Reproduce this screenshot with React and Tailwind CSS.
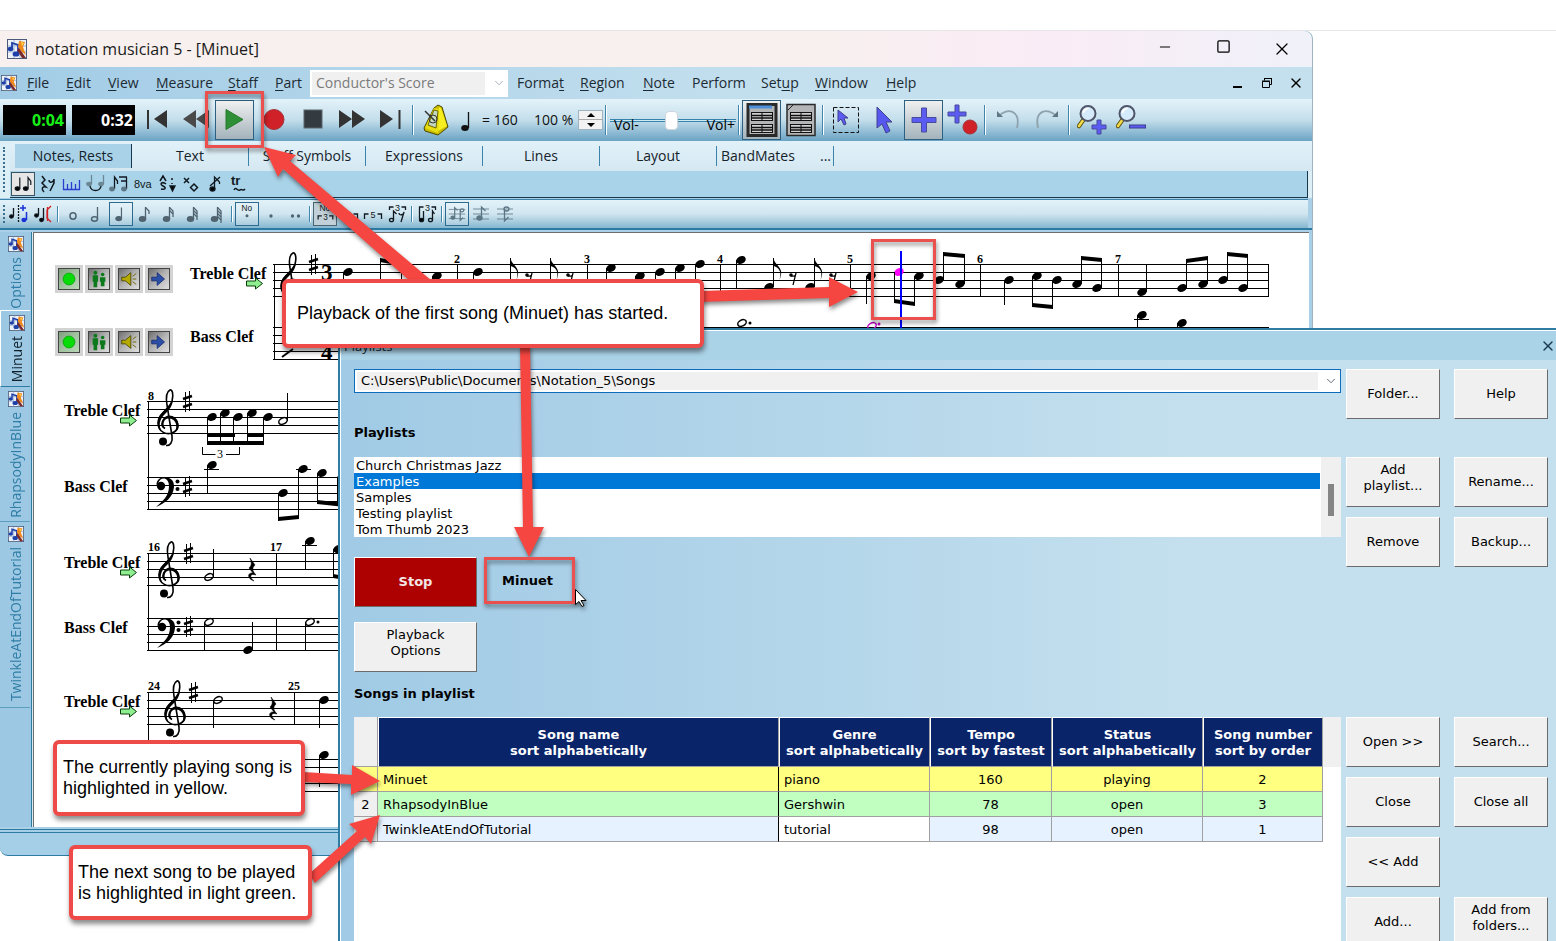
import { useState } from "react";
import { ChevronDown, Minus, Square, X } from "lucide-react";

const menusLeft = [
  { before: "", key: "F", after: "ile", width: "w-[39px]" },
  { before: "", key: "E", after: "dit", width: "w-[42px]" },
  { before: "", key: "V", after: "iew", width: "w-12" },
  { before: "", key: "M", after: "easure", width: "w-[72px]" },
  { before: "", key: "S", after: "taff", width: "w-[47px]" },
  { before: "", key: "P", after: "art", width: "w-[35px]" },
];

const menusRight = [
  { before: "Forma", key: "t", after: "", width: "w-[63px]" },
  { before: "", key: "R", after: "egion", width: "w-[63px]" },
  { before: "", key: "N", after: "ote", width: "w-[49px]" },
  { before: "Perform", key: "", after: "", width: "w-[69px]" },
  { before: "Set", key: "u", after: "p", width: "w-[54px]" },
  { before: "", key: "W", after: "indow", width: "w-[71px]" },
  { before: "", key: "H", after: "elp", width: "w-12" },
];

const paletteTabs = ["Notes, Rests", "Text", "Staff Symbols", "Expressions", "Lines", "Layout"];

const documents = [
  { name: "Options", height: "h-[79px]" },
  { name: "Minuet", height: "h-[76px]" },
  { name: "RhapsodyInBlue", height: "h-[135px]" },
  { name: "TwinkleAtEndOfTutorial", height: "h-[186px]" },
];

const playlists = [
  "Church Christmas Jazz",
  "Examples",
  "Samples",
  "Testing playlist",
  "Tom Thumb 2023",
];

const columns = [
  { title: "Song name", sort: "sort alphabetically", width: "" },
  { title: "Genre", sort: "sort alphabetically", width: "w-[151px]" },
  { title: "Tempo", sort: "sort by fastest", width: "w-[122px]" },
  { title: "Status", sort: "sort alphabetically", width: "w-[151px]" },
  { title: "Song number", sort: "sort by order", width: "w-[120px]" },
];

const songs = [
  { row: "", name: "Minuet", genre: "piano", tempo: 160, status: "playing", number: 2 },
  { row: "2", name: "RhapsodyInBlue", genre: "Gershwin", tempo: 78, status: "open", number: 3 },
  { row: "", name: "TwinkleAtEndOfTutorial", genre: "tutorial", tempo: 98, status: "open", number: 1 },
];

/* ---------- Icons ---------- */

function AppLogo({ className }) {
  return (
    <svg viewBox="0 0 20 20" className={className} aria-hidden="true">
      <rect x="0.5" y="0.5" width="19" height="19" fill="#eef3fb" stroke="#4a5a78" />
      <path d="M1 7h18M1 13h18M7 1v18M13 1v18" stroke="#9fb2d4" />
      <path d="M5 9V4l6 2v8" fill="none" stroke="#1c3fa8" strokeWidth="1.800" />
      <ellipse cx="3.5" cy="10" rx="2.800" ry="2.200" fill="#1c3fa8" />
      <ellipse cx="9" cy="15" rx="3.400" ry="2.600" fill="#1c3fa8" />
      <path d="M12 2l6 1-2 5 3 8-4-3-4-5z" fill="#f08a1c" />
      <path d="M12 9l7 10h-4l-5-8z" fill="#7c2b2a" />
      <path d="M14 3l3 1-2 3z" fill="#ffd34d" />
    </svg>
  );
}

function NoteIcon({ flags = 0, hollow = false, stem = true, color = "#4f6470" }) {
  return (
    <svg viewBox="0 0 24 24" className="h-6 w-6" aria-hidden="true">
      <ellipse
        cx={stem ? 9.5 : 12}
        cy={stem ? 17 : 14}
        rx="3"
        ry={stem ? 2.2 : 3.2}
        fill={hollow ? "none" : color}
        stroke={color}
        strokeWidth="1.5"
      />
      {stem && <path d="M12.500 17V5" stroke={color} strokeWidth="1.300" />}
      {Array.from({ length: flags }, (_, i) => (
        <path
          key={i}
          d={`M12.500 ${5.5 + i * 3}l3.500 3.500v3`}
          fill="none"
          stroke={color}
          strokeWidth="1.3"
        />
      ))}
    </svg>
  );
}

function Glyph({ children, ...rest }) {
  return (
    <svg
      viewBox="0 0 24 24"
      className="h-6 w-6"
      fill="none"
      stroke="#101820"
      strokeWidth="1.3"
      aria-hidden="true"
      {...rest}
    >
      {children}
    </svg>
  );
}

function GlyphText({ x, y, size = 9, children }) {
  return (
    <text x={x} y={y} fontSize={size} fill="#101820" stroke="none" fontFamily="Liberation Sans, sans-serif">
      {children}
    </text>
  );
}

function BigIcon({ children }) {
  return (
    <svg viewBox="0 0 30 30" className="h-[30px] w-[30px]" aria-hidden="true">
      {children}
    </svg>
  );
}

function BluePlus({ x, y, r = 12, w = 5 }) {
  const h = w / 2;
  return (
    <path
      d={`M${x - h} ${y - r}h${w}v${r - h}h${r - h}v${w}h${h - r}v${r - h}h${-w}v${h - r}h${h - r}v${-w}h${r - h}z`}
      fill="#5b5cf2"
      stroke="#4a4a9c"
      strokeWidth="1"
    />
  );
}

function Magnifier() {
  return (
    <>
      <path d="M7 14l-5 7" stroke="#5b5010" strokeWidth="4.500" strokeLinecap="round" />
      <path d="M7 14l-5 7" stroke="#f2d94a" strokeWidth="2.500" strokeLinecap="round" />
      <circle cx="11" cy="8.500" r="7.500" fill="#d5ebfb" stroke="#4f5568" strokeWidth="2" />
      <path d="M6.500 8a5 5 0 0 1 5-4.500" fill="none" stroke="#fff" strokeWidth="2" />
    </>
  );
}

function TableIcon({ framed }) {
  return (
    <svg viewBox="0 0 32 34" className="h-[34px] w-8" aria-hidden="true">
      <rect x="2" y="1.500" width="28" height="31" fill="#b3b5b7" stroke="#2a2a2a" strokeWidth={framed ? 3 : 1.5} />
      {framed && <path d="M3 4h23" stroke="#4d8fd8" strokeWidth="3" />}
      {!framed && <path d="M3 7l5-5" stroke="#222" />}
      {[9, 21].map((y) => (
        <g key={y} stroke="#111" fill="none">
          <rect x="5.500" y={y + 0.5} width="21" height="8" fill="#d0d0d0" />
          <path d={`M5 ${y + 3.5}h22M5 ${y + 6}h22`} strokeWidth="1.500" />
          <path d={`M16 ${y}v9`} />
        </g>
      ))}
    </svg>
  );
}

/* ---------- Toolbar pieces ---------- */

function ToolButton({ label, pressed, children }) {
  return (
    <button
      type="button"
      aria-label={label}
      className={
        pressed
          ? "flex h-10 w-[39px] shrink-0 items-center justify-center border border-[#2c5f80] bg-gradient-to-b from-[#f0f0f0] to-[#a3b3bb]"
          : "flex h-10 w-[39px] shrink-0 items-center justify-center"
      }
    >
      {children}
    </button>
  );
}

function SmallButton({ label, pressed, children }) {
  return (
    <button
      type="button"
      aria-label={label}
      className={
        pressed
          ? "flex h-6 w-6 shrink-0 items-center justify-center border border-[#2c6a90] bg-[#ffffff30]"
          : "flex h-6 w-6 shrink-0 items-center justify-center"
      }
    >
      {children}
    </button>
  );
}

function Separator({ tall }) {
  return (
    <div className="flex w-[6px] shrink-0 justify-center">
      <div
        className={
          tall
            ? "h-[30px] w-[2px] border-l border-[#3f86ad] bg-white"
            : "h-4 w-[2px] border-l border-[#3f86ad] bg-white"
        }
      />
    </div>
  );
}

function MenuItem({ item }) {
  return (
    <button type="button" className={`${item.width} shrink-0 text-left whitespace-nowrap`}>
      {item.before}
      <u className="underline-offset-2">{item.key}</u>
      {item.after}
    </button>
  );
}

function TitleBar() {
  return (
    <div className="flex h-9 items-center rounded-tr-lg bg-gradient-to-r from-[#f8f0ee] from-60% via-[#faecf6] via-80% to-[#f0f1f9] pl-[7px]">
      <AppLogo className="h-5 w-5" />
      <h1 className="ml-2 flex-1 text-base leading-5 text-[#1b1b1b]">notation musician 5 - [Minuet]</h1>
      <div className="flex text-black">
        <button type="button" aria-label="Minimize" className="flex w-[58px] justify-center">
          <Minus className="h-4 w-4" strokeWidth={1.5} />
        </button>
        <button type="button" aria-label="Maximize" className="flex w-[58px] justify-center">
          <Square className="h-[15px] w-[15px]" strokeWidth={2} />
        </button>
        <button type="button" aria-label="Close" className="flex w-[60px] justify-center">
          <X className="h-5 w-5" strokeWidth={1.5} />
        </button>
      </div>
    </div>
  );
}

function MenuBar() {
  return (
    <div className="flex h-8 items-center bg-gradient-to-r from-[#a2cce6] to-[#c4e0ee] to-60% text-sm text-[#1c2a33]">
      <AppLogo className="ml-[1px] mr-[10px] h-4 w-4" />
      {menusLeft.map((item) => (
        <MenuItem key={item.key} item={item} />
      ))}
      <div className="relative mr-[9px] h-[27px] w-[198px] shrink-0 border-2 border-white bg-white">
        <select
          aria-label="Score view"
          disabled
          className="h-full w-[173px] appearance-none bg-[#f0f0f0] pl-1 text-sm text-[#7b7b7b] opacity-100"
        >
          <option>Conductor's Score</option>
        </select>
        <ChevronDown className="absolute right-0 top-1 h-[14px] w-[14px] text-gray-400" strokeWidth={1.5} />
      </div>
      {menusRight.map((item) => (
        <MenuItem key={item.before + item.key} item={item} />
      ))}
      <div className="ml-auto mr-2 flex gap-3 text-black">
        <button type="button" aria-label="Minimize document" className="flex h-4 w-[17px] items-end justify-center pb-[3px]">
          <span className="h-[2px] w-[9px] bg-black" />
        </button>
        <button type="button" aria-label="Restore document" className="flex h-4 w-[17px] items-center justify-center">
          <svg viewBox="0 0 12 12" className="h-3 w-3" fill="none" stroke="#000">
            <path d="M3.500 3.500v-2h7v6h-2M3 1.500h8" />
            <path d="M1.500 4.500h7v6h-7zM1 4h8" />
          </svg>
        </button>
        <button type="button" aria-label="Close document" className="flex h-4 w-[17px] items-center justify-center">
          <X className="h-4 w-4" />
        </button>
      </div>
    </div>
  );
}

function Transport() {
  return (
    <div className="flex h-[42px] items-center bg-gradient-to-b from-[#e4f3fa] via-[#c3deeb] to-[#6aa3c4] pl-[3px]">
      <output className="flex h-[30px] w-[63px] items-center justify-end bg-black pr-[2px] font-['Noto_Sans',sans-serif] text-base font-bold text-[#17f017]">
        0:04
      </output>
      <output className="ml-[6px] mr-[2px] flex h-[30px] w-[63px] items-center justify-end bg-black pr-[2px] font-['Noto_Sans',sans-serif] text-base font-bold text-white">
        0:32
      </output>
      <ToolButton label="Go to start">
        <BigIcon>
          <path d="M6 5v19" stroke="#333" strokeWidth="2" />
          <path d="M25 5v18L12 14z" fill="#333" />
        </BigIcon>
      </ToolButton>
      <ToolButton label="Rewind">
        <BigIcon>
          <path d="M15 5v18L2 14zM28 5v18L15 14z" fill="#4a4a4a" />
        </BigIcon>
      </ToolButton>
      <ToolButton label="Play" pressed>
        <BigIcon>
          <path d="M6 4.500l17 10-17 10z" fill="#2f8f37" stroke="#277a2e" />
        </BigIcon>
      </ToolButton>
      <ToolButton label="Record">
        <BigIcon>
          <circle cx="15" cy="14.500" r="10" fill="#cf2127" stroke="#a3343a" />
        </BigIcon>
      </ToolButton>
      <ToolButton label="Stop playback">
        <BigIcon>
          <rect x="6" y="5" width="18" height="18" fill="#333a40" stroke="#5b666d" />
        </BigIcon>
      </ToolButton>
      <ToolButton label="Fast forward">
        <BigIcon>
          <path d="M2 5v18l13-9zM15 5v18l13-9z" fill="#333" />
        </BigIcon>
      </ToolButton>
      <ToolButton label="Go to end">
        <BigIcon>
          <path d="M23.500 5v19" stroke="#333" strokeWidth="2" />
          <path d="M4 5v18l13-9z" fill="#333" />
        </BigIcon>
      </ToolButton>
      <Separator tall />
      <ToolButton label="Metronome">
        <svg viewBox="0 0 30 32" className="h-8 w-[30px]" aria-hidden="true">
          <path d="M13 4l4-3 4 2 6 20-10 8-13-4-1-3z" fill="#c9bd00" stroke="#4d4700" />
          <path d="M18 3l-1 24 9-5-6-18z" fill="#f6ee1e" />
          <path d="M13 4L4 24l13 5 1-24z" fill="#e9de10" />
          <path d="M13 6L7 21l8 3 2-17z" fill="#c5d9c0" stroke="#6b6600" />
          <path d="M4 7l10 10" stroke="#333" strokeWidth="1.500" />
          <circle cx="12" cy="15" r="4" fill="none" stroke="#333" />
        </svg>
      </ToolButton>
      <div className="flex w-[21px] justify-center">
        <svg viewBox="0 0 12 24" className="h-6 w-3" aria-hidden="true">
          <ellipse cx="5" cy="20" rx="3.800" ry="3" fill="#111" />
          <path d="M8.500 20V4" stroke="#111" strokeWidth="1.300" />
        </svg>
      </div>
      <span className="ml-[6px] w-[52px] shrink-0 text-sm whitespace-nowrap text-[#111]">= 160</span>
      <span className="w-11 shrink-0 text-sm whitespace-nowrap text-[#111]">100 %</span>
      <div className="flex w-[25px] shrink-0 flex-col border border-[#9fb4c0] bg-[#f2f2f2]">
        <button type="button" aria-label="Faster" className="flex h-[9px] items-center justify-center border-b border-[#aaa]">
          <svg viewBox="0 0 8 4" className="h-1 w-2">
            <path d="M0 4l4-4 4 4z" />
          </svg>
        </button>
        <button type="button" aria-label="Slower" className="flex h-[9px] items-center justify-center">
          <svg viewBox="0 0 8 4" className="h-1 w-2">
            <path d="M0 0l4 4 4-4z" />
          </svg>
        </button>
      </div>
      <Separator tall />
      <div className="relative ml-[1px] flex h-10 w-[126px] shrink-0 items-center">
        <input
          type="range"
          aria-label="Volume"
          defaultValue={49}
          className="h-[3px] w-full appearance-none border-y border-[#3484ae] bg-[#cfe8f4] [&::-webkit-slider-thumb]:h-[19px] [&::-webkit-slider-thumb]:w-[13px] [&::-webkit-slider-thumb]:appearance-none [&::-webkit-slider-thumb]:rounded [&::-webkit-slider-thumb]:border [&::-webkit-slider-thumb]:border-gray-300 [&::-webkit-slider-thumb]:bg-white"
        />
        <span className="pointer-events-none absolute left-1 top-[15px] text-sm leading-5 font-medium text-black">Vol-</span>
        <span className="pointer-events-none absolute right-[1px] top-[15px] text-sm leading-5 font-medium text-black">Vol+</span>
      </div>
      <Separator tall />
      <ToolButton label="Piano palette" pressed>
        <TableIcon framed />
      </ToolButton>
      <ToolButton label="Part list">
        <TableIcon />
      </ToolButton>
      <Separator tall />
      <ToolButton label="Select region">
        <BigIcon>
          <rect x="2.500" y="2.500" width="25" height="25" fill="none" stroke="#111" strokeDasharray="4 2" />
          <path d="M7 5v12l3-3 3 6 2-1-2-6h4z" fill="#5b5cf2" stroke="#40408a" />
        </BigIcon>
      </ToolButton>
      <ToolButton label="Pointer">
        <BigIcon>
          <path d="M7 2v21l5-4 4 9 4-2-4-9h6z" fill="#5758ef" stroke="#42428c" />
        </BigIcon>
      </ToolButton>
      <ToolButton label="Add note" pressed>
        <BigIcon>
          <BluePlus x={15} y={15} />
        </BigIcon>
      </ToolButton>
      <ToolButton label="Add and record">
        <svg viewBox="0 0 32 32" className="h-8 w-8" aria-hidden="true">
          <BluePlus x={10} y={10} r={9} w={4} />
          <circle cx="23" cy="23" r="7" fill="#cf2127" stroke="#a3343a" />
        </svg>
      </ToolButton>
      <Separator tall />
      <ToolButton label="Undo">
        <BigIcon>
          <path d="M24 23C28 5 14 2 6 11" fill="none" stroke="#8fa3ae" strokeWidth="1.800" />
          <path d="M4 6v6h6z" fill="#5f7683" />
        </BigIcon>
      </ToolButton>
      <ToolButton label="Redo">
        <BigIcon>
          <path d="M6 23C2 5 16 2 24 11" fill="none" stroke="#8fa3ae" strokeWidth="1.800" />
          <path d="M26 6v6h-6z" fill="#5f7683" />
        </BigIcon>
      </ToolButton>
      <Separator tall />
      <ToolButton label="Zoom in">
        <BigIcon>
          <Magnifier />
          <BluePlus x={22} y={22} r={7} w={4} />
        </BigIcon>
      </ToolButton>
      <ToolButton label="Zoom out">
        <BigIcon>
          <Magnifier />
          <rect x="13.500" y="20" width="16" height="3" fill="#5b5cf2" stroke="#3c3c8c" />
        </BigIcon>
      </ToolButton>
    </div>
  );
}

function Palettes() {
  return (
    <div className="flex bg-[#dceef6]">
      <div className="my-[6px] ml-[3px] mr-[5px] w-0 border-l-2 border-dotted border-[#3c6f8d]" />
      <div className="min-w-0 flex-1">
        <div className="flex h-[30px] items-center bg-gradient-to-b from-[#e1f1f9] to-[#d5e8f1] pl-[5px] text-sm text-[#16222b]">
          {paletteTabs.map((tab, i) => (
            <button
              key={tab}
              type="button"
              className={
                i === 0
                  ? "h-6 w-[117px] shrink-0 border-r border-[#16394e] bg-[#a9d2e8]"
                  : "h-5 w-[117px] shrink-0 border-r border-[#3b83aa]"
              }
            >
              {tab}
            </button>
          ))}
          <button
            type="button"
            className="flex h-5 w-[117px] shrink-0 items-center justify-between border-r border-[#3b83aa] pr-[2px] pl-1"
          >
            <span>BandMates</span>
            <span>...</span>
          </button>
        </div>
        <div className="mr-1 flex h-[27px] items-center border-r border-b border-[#17384b] bg-[#a9d3e8] pl-px">
          <button
            type="button"
            aria-label="Notes"
            className="flex h-6 w-6 shrink-0 items-center justify-center border border-[#3a5361] bg-[#e6e6e6]"
          >
            <Glyph>
              <ellipse cx="6" cy="17" rx="2.500" ry="2" fill="#000" />
              <ellipse cx="15" cy="17" rx="2.500" ry="2" fill="#000" />
              <path d="M8.500 17V5M17.500 17V5l3 4v4" />
            </Glyph>
          </button>
          <SmallButton label="Rests">
            <Glyph>
              <path d="M7 4l3 4-3 3 4 4c-4-1-5 2-2 5M14 8c0 4 5 2 5-1v4l-4 8" strokeWidth="1.500" />
            </Glyph>
          </SmallButton>
          <SmallButton label="Rhythm grid">
            <Glyph stroke="#2a3fd0">
              <path d="M4.500 7v11M8.500 12v6M12.500 10v8M16.500 12v6M20.500 8v10M4 17.500h17" />
            </Glyph>
          </SmallButton>
          <SmallButton label="Ties">
            <Glyph>
              <path d="M8.500 12V3M20.500 12V3" stroke="#6c8795" />
              <path d="M7 14c1 6 10 6 11 0" strokeWidth="1.500" />
              <ellipse cx="6" cy="12" rx="2.200" ry="1.700" fill="#6c8795" stroke="#6c8795" />
              <ellipse cx="18" cy="12" rx="2.200" ry="1.700" fill="#6c8795" stroke="#6c8795" />
            </Glyph>
          </SmallButton>
          <SmallButton label="Beams">
            <Glyph>
              <path d="M7.500 17V5l3 4v3M12 5h8M14 9h6M19.500 5v12" />
              <ellipse cx="5" cy="17" rx="2.200" ry="1.800" fill="#5d7685" stroke="#5d7685" />
              <ellipse cx="17" cy="17" rx="2.200" ry="1.800" fill="#5d7685" stroke="#5d7685" />
            </Glyph>
          </SmallButton>
          <SmallButton label="Octave">
            <Glyph>
              <GlyphText x="3" y="16" size={11}>8va</GlyphText>
            </Glyph>
          </SmallButton>
          <SmallButton label="Ornaments">
            <Glyph>
              <path d="M5 9l3-5 3 5M11 12c-4-3-7 0-3 2s2 4-2 3M17 6v2M17 11v1" strokeWidth="1.500" />
              <path d="M15 14h5l-2.500 5z" fill="#000" />
            </Glyph>
          </SmallButton>
          <SmallButton label="Note heads">
            <Glyph>
              <path d="M5 6l5 5M10 6l-5 5M15 12l3.500 3.500-3.500 3.500-3.500-3.500z" strokeWidth="1.500" />
            </Glyph>
          </SmallButton>
          <SmallButton label="Grace notes">
            <Glyph>
              <path d="M11.500 17V5l5 5v2M7 14l10-9" />
              <ellipse cx="9.500" cy="17" rx="2.500" ry="2" fill="#000" />
            </Glyph>
          </SmallButton>
          <SmallButton label="Trills">
            <Glyph>
              <text x="4" y="13" fontSize="13" fontWeight="bold" fill="#101820" stroke="none" fontFamily="Liberation Sans, sans-serif">
                tr
              </text>
              <path d="M7 18c2-4 4 2 6 0s3 2 5-1" strokeWidth="1.500" />
            </Glyph>
          </SmallButton>
        </div>
      </div>
    </div>
  );
}

function Tuplet({ n }) {
  return (
    <>
      <path d="M3.500 17v-5h4M20.500 17v-5h-4" />
      <GlyphText x={9.5} y={16}>{n}</GlyphText>
    </>
  );
}

function NoteValues() {
  return (
    <div className="mt-px mr-1 flex h-[29px] items-center border-t border-[#3b83aa] bg-gradient-to-b from-[#e3f2f9] via-[#cfe5ef] to-[#86b7d0]">
      <div className="ml-[3px] mr-[2px] h-[18px] w-[2px] border-l-2 border-dotted border-[#3c6f8d]" />
      <SmallButton label="Insert notes">
        <Glyph>
          <path d="M6.500 14V6" />
          <path d="M11.500 3v17" strokeDasharray="2 1" />
          <ellipse cx="4.500" cy="14.500" rx="1.800" ry="1.500" fill="#000" />
          <path d="M13 6h6M16 3v6M19.500 18V10" stroke="#1830d8" strokeWidth="1.500" />
          <ellipse cx="17" cy="18" rx="2" ry="1.500" fill="#1830d8" stroke="#1830d8" />
        </Glyph>
      </SmallButton>
      <SmallButton label="Replace notes">
        <Glyph>
          <path d="M7.500 13V6M12.500 18V6" />
          <ellipse cx="5.500" cy="13.500" rx="1.800" ry="1.500" fill="#000" />
          <ellipse cx="10.500" cy="18" rx="1.800" ry="1.500" fill="#000" />
          <path d="M20 4l-4 4v8l4 4M16.500 5v14" stroke="#d02020" />
        </Glyph>
      </SmallButton>
      <Separator />
      <SmallButton label="Whole note">
        <NoteIcon hollow stem={false} />
      </SmallButton>
      <SmallButton label="Half note">
        <NoteIcon hollow />
      </SmallButton>
      <SmallButton label="Quarter note" pressed>
        <NoteIcon />
      </SmallButton>
      <SmallButton label="Eighth note">
        <NoteIcon flags={1} />
      </SmallButton>
      <SmallButton label="Sixteenth note">
        <NoteIcon flags={2} />
      </SmallButton>
      <SmallButton label="Thirty-second note">
        <NoteIcon flags={3} />
      </SmallButton>
      <SmallButton label="Sixty-fourth note">
        <NoteIcon flags={4} />
      </SmallButton>
      <Separator />
      <SmallButton label="No dot" pressed>
        <Glyph>
          <GlyphText x="6" y="9" size={9}>No</GlyphText>
          <circle cx="12" cy="14" r="1" fill="#4a6472" stroke="#4a6472" />
        </Glyph>
      </SmallButton>
      <SmallButton label="Dotted">
        <Glyph>
          <circle cx="12" cy="14" r="1" fill="#4a6472" stroke="#4a6472" />
        </Glyph>
      </SmallButton>
      <SmallButton label="Double dotted">
        <Glyph>
          <circle cx="9.500" cy="14" r="1" fill="#4a6472" stroke="#4a6472" />
          <circle cx="15.500" cy="14" r="1" fill="#4a6472" stroke="#4a6472" />
        </Glyph>
      </SmallButton>
      <Separator />
      <button
        type="button"
        aria-label="No tuplet"
        className="flex h-6 w-6 shrink-0 items-center justify-center border border-[#4b6573] bg-[#c2d1d9]"
      >
        <Glyph>
          <GlyphText x="6" y="9" size={9}>No</GlyphText>
          <path d="M4.500 18v-4h4M20.500 18v-4h-4" />
          <GlyphText x="10" y="18">3</GlyphText>
        </Glyph>
      </button>
      <SmallButton label="Triplet">
        <Glyph>
          <Tuplet n="3" />
        </Glyph>
      </SmallButton>
      <SmallButton label="Quintuplet">
        <Glyph>
          <Tuplet n="5" />
        </Glyph>
      </SmallButton>
      <SmallButton label="Custom tuplet">
        <Glyph>
          <path d="M4.500 8V5h4M20.500 8V5h-4M8.500 18V9l3 3M14 11c0 3 5 2 5-1l-3 10" />
          <ellipse cx="6.500" cy="18" rx="2" ry="1.700" />
          <GlyphText x="10" y="9">3</GlyphText>
        </Glyph>
      </SmallButton>
      <Separator />
      <SmallButton label="Tuplet group">
        <Glyph>
          <path d="M4.500 17V5h4M20.500 8V5h-4M8.500 18V9M17.500 18V9l2 3" />
          <ellipse cx="6.500" cy="18" rx="2" ry="1.700" fill="#000" />
          <ellipse cx="15.500" cy="18" rx="2" ry="1.700" />
          <GlyphText x="10" y="9">3</GlyphText>
        </Glyph>
      </SmallButton>
      <Separator />
      <SmallButton label="Both stems" pressed>
        <Glyph stroke="#5b7584">
          <path d="M3 7h18M3 12h18M3 17h18" strokeWidth="0.800" />
          <path d="M9.500 16V5l3 3M15.500 8v11l3-3" />
          <ellipse cx="7.500" cy="16" rx="2" ry="1.700" fill="#5b7584" />
          <ellipse cx="17.500" cy="8" rx="2" ry="1.700" />
        </Glyph>
      </SmallButton>
      <SmallButton label="Stems up">
        <Glyph stroke="#5b7584">
          <path d="M4 7h16M4 12h16M4 17h16" strokeWidth="0.800" />
          <path d="M12.500 16V5l4 4" />
          <ellipse cx="10.500" cy="16" rx="2.500" ry="2" fill="#5b7584" />
        </Glyph>
      </SmallButton>
      <SmallButton label="Stems down">
        <Glyph stroke="#5b7584">
          <path d="M4 7h16M4 12h16M4 17h16" strokeWidth="0.800" />
          <path d="M11.500 7v12l4-4" />
          <ellipse cx="13.500" cy="7" rx="2.500" ry="2" />
        </Glyph>
      </SmallButton>
    </div>
  );
}

/* ---------- Score drawing ---------- */

function Staff({ x1, x2, y }) {
  return (
    <path
      d={[0, 8, 16, 24, 32].map((dy) => `M${x1} ${y + dy + 0.5}H${x2}`).join("")}
      stroke="#000"
      shapeRendering="crispEdges"
    />
  );
}

function Bar({ x, y1, y2 }) {
  return <path d={`M${x + 0.5} ${y1}V${y2}`} stroke="#000" shapeRendering="crispEdges" />;
}

function Note({ x, y, to, hollow, flag, color = "#000" }) {
  const up = to < y;
  const stemX = Math.round(up ? x + 4 : x - 5) + 0.5;
  return (
    <g>
      <ellipse
        cx={x}
        cy={y}
        rx={hollow ? 4.5 : 5}
        ry={hollow ? 3 : 3.8}
        transform={`rotate(-28 ${x} ${y})`}
        fill={hollow ? "none" : color}
        stroke={hollow ? color : "none"}
        strokeWidth="1.5"
      />
      {to && <path d={`M${stemX} ${y}V${to}`} stroke="#000" shapeRendering="crispEdges" />}
      {flag && <path d={`M${stemX} ${to}c1 8 12 9 6 22c3-10-2-13-6-14z`} />}
    </g>
  );
}

function Beam({ x1, y1, x2, y2 }) {
  return <path d={`M${x1} ${y1}L${x2} ${y2}v4L${x1} ${y1 + 4}z`} />;
}

function Sharp({ x, y }) {
  return (
    <g stroke="#000">
      <path d={`M${x - 1.5} ${y - 9}v20M${x + 2.5} ${y - 10}v20`} />
      <path d={`M${x - 4} ${y - 2}l9-3M${x - 4} ${y + 6}l9-3`} strokeWidth="2.500" />
    </g>
  );
}

function EighthRest({ x, y }) {
  return (
    <g>
      <circle cx={x - 2} cy={y - 2} r="1.800" />
      <path d={`M${x - 2} ${y - 1}q5 1 5-3l-3 12`} fill="none" stroke="#000" strokeWidth="1.200" />
    </g>
  );
}

function QuarterRest({ x, y }) {
  return (
    <path
      d={`M${x - 2} ${y - 11}l5 7q-5 4 1 10c-6-2-7 2-2 6c-8-3-6-9-1-8l-4-5q4-3 1-10z`}
      stroke="#000"
      strokeWidth="0.500"
    />
  );
}

// origin sits on the G line
function TrebleClef({ x, y }) {
  return (
    <g transform={`translate(${x} ${y})`}>
      <path
        d="M-3 3.500C-9 0-5-8 1-8C10-8 13 3 6 7C-1 11-10 7-10-2C-10-12 1-15 4-24C6-31 4-36 2-35C-2-33-2-26-1-20L4 11C5 17 2 21-2 20.500"
        fill="none"
        stroke="#000"
        strokeWidth="1.600"
      />
      <path d="M-3 3.500C-9 0-5-9.500 1-9.500C11-9.500 14 4 6 8C10 3 9-6 1-6.500C-4-7-6-1-3 3.500z" />
      <path d="M-8.500 4C-14-6-5-13 0-18C3-21 4-24 5-29C6-20 1-15-3-11C-7-7-10-2-7 5z" />
      <circle cx="-5" cy="16.500" r="4" />
    </g>
  );
}

// origin sits on the F line
function BassClef({ x, y }) {
  return (
    <g transform={`translate(${x} ${y})`}>
      <circle cx="-6" cy="1" r="4.200" />
      <path d="M-10.500 0C-11-11 8-11 7 2C6 13-2 18-11 22C-4 16 2 11 2 1C2-8-7-9-9-1z" />
      <circle cx="10.500" cy="-3.500" r="2" />
      <circle cx="10.500" cy="4" r="2" />
    </g>
  );
}

function BarNumber({ x, y, children }) {
  return (
    <text x={x} y={y} fontFamily="Liberation Serif, serif" fontSize="12" fontWeight="bold">
      {children}
    </text>
  );
}

function SystemOne() {
  return (
    <svg viewBox="272 233 1000 151" className="h-[151px] w-[1000px] shrink-0" aria-label="Measures 1 to 7">
      <Staff x1={273} x2={1269} y={264} />
      <Staff x1={273} x2={1269} y={327} />
      <Bar x={274} y1={264} y2={360} />
      {[457, 587, 720, 850, 980, 1118, 1268].map((x) => (
        <Bar key={x} x={x} y1={264} y2={297} />
      ))}
      <TrebleClef x={291} y={288} />
      <path d="M282 357l11-8" stroke="#000" strokeWidth="2" />
      <Sharp x={313} y={264} />
      <text x="321" y="280" fontFamily="Liberation Serif, serif" fontSize="23" fontWeight="bold">3</text>
      <text x="321" y="360" fontFamily="Liberation Serif, serif" fontSize="23" fontWeight="bold">4</text>
      <BarNumber x={454} y={263}>2</BarNumber>
      <BarNumber x={584} y={263}>3</BarNumber>
      <BarNumber x={717} y={263}>4</BarNumber>
      <BarNumber x={847} y={263}>5</BarNumber>
      <BarNumber x={977} y={263}>6</BarNumber>
      <BarNumber x={1115} y={263}>7</BarNumber>

      <Note x={348} y={272} to={300} />
      <Note x={376} y={288} to={258} />
      <Note x={397} y={284} to={262} />
      <Beam x1={380} y1={258} x2={402} y2={262} />
      <Note x={437} y={276} to={304} />
      <Note x={478} y={272} to={300} />
      <Note x={506} y={288} to={258} flag />
      <EighthRest x={529} y={277} />
      <Note x={546} y={288} to={258} flag />
      <EighthRest x={570} y={277} />
      <Note x={611} y={268} to={296} />
      <Note x={640} y={276} to={304} />
      <Note x={660} y={272} to={300} />
      <Note x={680} y={268} to={296} />
      <Note x={700} y={264} to={296} />
      <Note x={741} y={260} to={288} />
      <Note x={769} y={287} to={258} flag />
      <EighthRest x={793} y={277} />
      <Note x={810} y={287} to={258} flag />
      <EighthRest x={833} y={277} />
      <Note x={871} y={276} to={304} />
      <Note x={899} y={272} to={300} color="#ff00ff" />
      <Note x={919} y={276} to={304} />
      <Beam x1={894} y1={299} x2={915} y2={302} />
      <Note x={939} y={280} to={252} />
      <Note x={960} y={284} to={255} />
      <Beam x1={943} y1={252} x2={965} y2={254} />
      <Note x={1009} y={280} to={305} />
      <Note x={1037} y={276} to={305} />
      <Note x={1057} y={280} to={308} />
      <Beam x1={1032} y1={303} x2={1053} y2={305} />
      <Note x={1077} y={284} to={256} />
      <Note x={1097} y={288} to={258} />
      <Beam x1={1081} y1={256} x2={1102} y2={258} />
      <Note x={1142} y={292} to={264} />
      <Note x={1182} y={288} to={260} />
      <Note x={1203} y={284} to={257} />
      <Beam x1={1186} y1={259} x2={1208} y2={256} />
      <Note x={1223} y={280} to={252} />
      <Note x={1243} y={288} to={254} />
      <Beam x1={1227} y1={252} x2={1248} y2={254} />

      <Note x={742} y={323} hollow />
      <circle cx="750" cy="323" r="1.500" />
      <Note x={872} y={326} hollow color="#c000c0" />
      <circle cx="879" cy="324" r="1.500" fill="#c000c0" />
      <Note x={1142} y={315} to={343} />
      <path d="M1134 319.500h15" stroke="#000" />
      <Note x={1182} y={323} to={343} />
      <path d="M901 251v77" stroke="#0000ff" strokeWidth="2" />
    </svg>
  );
}

function SystemTwo() {
  return (
    <svg viewBox="145 384 200 150" className="h-[150px] w-[200px] shrink-0" aria-label="Measure 8">
      <Staff x1={147} x2={345} y={401} />
      <Staff x1={147} x2={345} y={477} />
      <Bar x={148} y1={401} y2={510} />
      <BarNumber x={148} y={400}>8</BarNumber>
      <TrebleClef x={168} y={425} />
      <Sharp x={187} y={401} />
      <Note x={212} y={417} to={445} />
      <Note x={225} y={413} to={445} />
      <Note x={238} y={417} to={445} />
      <Note x={252} y={413} to={445} />
      <Note x={268} y={417} to={445} />
      <path d="M207 441h57v4h-57zM207 433h28v4h-28zM247 433h17v4h-17z" />
      <Note x={283} y={421} to={393} hollow />
      <path d="M202.500 447v7.500h13M226 454.500h13.500V447" fill="none" stroke="#000" />
      <text x="217" y="458" fontFamily="Liberation Serif, serif" fontSize="12">3</text>
      <BassClef x={167} y={485} />
      <Sharp x={187} y={486} />
      <Note x={212} y={465} to={493} />
      <path d="M204 469.500h15M296 469.500h15" stroke="#000" />
      <Note x={283} y={493} to={521} />
      <Note x={303} y={469} to={518} />
      <Beam x1={278} y1={517} x2={299} y2={515} />
      <Note x={322} y={473} to={503} />
      <Beam x1={317} y1={500} x2={345} y2={503} />
      <Note x={342} y={477} to={503} />
    </svg>
  );
}

function SystemThree() {
  return (
    <svg viewBox="145 534 200 142" className="h-[142px] w-[200px] shrink-0" aria-label="Measures 16 and 17">
      <Staff x1={147} x2={345} y={553} />
      <Staff x1={147} x2={345} y={618} />
      <Bar x={148} y1={553} y2={651} />
      <Bar x={276} y1={553} y2={586} />
      <Bar x={276} y1={618} y2={651} />
      <BarNumber x={148} y={551}>16</BarNumber>
      <BarNumber x={270} y={551}>17</BarNumber>
      <TrebleClef x={169} y={577} />
      <Sharp x={188} y={553} />
      <Note x={209} y={577} to={549} hollow />
      <QuarterRest x={252} y={569} />
      <Note x={310} y={541} to={569} />
      <path d="M302 545.500h15" stroke="#000" />
      <Note x={338} y={549} to={577} />
      <Beam x1={333} y1={574} x2={345} y2={576} />
      <BassClef x={168} y={626} />
      <Sharp x={188} y={626} />
      <Note x={209} y={622} to={650} hollow />
      <Note x={248} y={650} to={622} />
      <Note x={310} y={622} to={650} hollow />
      <circle cx="318" cy="622" r="1.500" />
    </svg>
  );
}

function SystemFour() {
  return (
    <svg viewBox="145 676 200 151" className="h-[151px] w-[200px] shrink-0" aria-label="Measures 24 and 25">
      <Staff x1={147} x2={345} y={692} />
      <Staff x1={147} x2={345} y={759} />
      <Bar x={148} y1={692} y2={792} />
      <Bar x={294} y1={692} y2={725} />
      <BarNumber x={148} y={690}>24</BarNumber>
      <BarNumber x={288} y={690}>25</BarNumber>
      <TrebleClef x={175} y={716} />
      <Sharp x={193} y={692} />
      <Note x={218} y={700} to={728} hollow />
      <QuarterRest x={273} y={708} />
      <Note x={324} y={700} to={728} />
      <Note x={324} y={755} to={787} />
    </svg>
  );
}

function StaffLabel({ children, marker }) {
  return (
    <div className="relative h-[18px] font-['Liberation_Serif',serif] text-base leading-[18px] font-bold whitespace-nowrap text-black">
      {children}
      {marker && (
        <svg viewBox="0 0 18 13" className="absolute left-[56px] top-3 h-[13px] w-[18px]" aria-hidden="true">
          <path d="M0.500 4h9V1l7 5.500-7 5.500V9h-9z" fill="#8fee8f" stroke="#0b3d0b" />
        </svg>
      )}
    </div>
  );
}

function TrackButton({ label, children }) {
  return (
    <button type="button" aria-label={label} className="h-7 w-7 shrink-0 bg-[#d3d3d3] p-[3px]">
      <svg viewBox="0 0 22 22" className="h-[22px] w-[22px] border border-[#444] bg-gradient-to-br from-[#6f6f6f] via-[#b4b4b4] to-[#e0e0e0]">
        {children}
      </svg>
    </button>
  );
}

function TrackHeader({ name, marker }) {
  return (
    <div className="flex gap-[2px]">
      <TrackButton label={`Record ${name}`}>
        <rect width="22" height="22" fill="#8fd08f" opacity="0.500" />
        <circle cx="11" cy="11" r="6.500" fill="#08dc08" stroke="#0aa80a" />
      </TrackButton>
      <TrackButton label={`Group ${name}`}>
        <g fill="#0c7a1c">
          <circle cx="7" cy="4" r="2.200" />
          <path d="M4 7h6v7H9v6H5v-6H4z" />
          <circle cx="15" cy="6" r="2" />
          <path d="M12 9h6v5h-1v5h-4v-5h-1z" />
        </g>
      </TrackButton>
      <TrackButton label={`Mute ${name}`}>
        <path d="M3 9h4l6-5v14l-6-5H3z" fill="#b5ab00" stroke="#4d4900" />
        <path d="M15 8l4-3M15 11h4M15 14l4 3" stroke="#6b6500" />
      </TrackButton>
      <TrackButton label={`Solo ${name}`}>
        <path d="M3 9h6V4l8 7-8 7v-5H3z" fill="#2b4fa8" stroke="#1c2f73" />
      </TrackButton>
      <div className="ml-[15px]">
        <StaffLabel marker={marker}>{name}</StaffLabel>
      </div>
    </div>
  );
}

function Score() {
  return (
    <div className="min-w-0 flex-1 overflow-hidden border-t border-l border-[#6d6d6d] bg-white">
      <div className="flex">
        <div className="flex w-[238px] shrink-0 flex-col gap-[35px] pt-8 pl-[21px]">
          <TrackHeader name="Treble Clef" marker />
          <TrackHeader name="Bass Clef" />
        </div>
        <SystemOne />
      </div>
      <div className="flex">
        <div className="flex w-[111px] shrink-0 flex-col gap-[58px] pt-[18px] pl-[30px]">
          <StaffLabel marker>Treble Clef</StaffLabel>
          <StaffLabel>Bass Clef</StaffLabel>
        </div>
        <SystemTwo />
      </div>
      <div className="flex">
        <div className="flex w-[111px] shrink-0 flex-col gap-[47px] pt-5 pl-[30px]">
          <StaffLabel marker>Treble Clef</StaffLabel>
          <StaffLabel>Bass Clef</StaffLabel>
        </div>
        <SystemThree />
      </div>
      <div className="flex">
        <div className="w-[111px] shrink-0 pt-[17px] pl-[30px]">
          <StaffLabel marker>Treble Clef</StaffLabel>
        </div>
        <SystemFour />
      </div>
    </div>
  );
}

function DocumentTabs() {
  return (
    <div className="w-8 shrink-0 border-r border-[#2d7ba3] bg-[#9cc8e3]">
      {documents.map((doc) => (
        <button
          key={doc.name}
          type="button"
          className={`${doc.height} flex w-[30px] flex-col items-center gap-[5px] border-b pt-1 pl-[2px] text-sm ${
            doc.name === "Minuet"
              ? "border-b-[#2d7ba3] border-l border-l-white text-[#10202b]"
              : doc.name === "Options"
                ? "border-b-white text-[#2f7da6]"
                : "border-b-[#5d9dc0] text-[#2f7da6]"
          }`}
        >
          <AppLogo className="h-4 w-4 shrink-0" />
          <span className="rotate-180 leading-4 whitespace-nowrap [writing-mode:vertical-rl]">{doc.name}</span>
        </button>
      ))}
    </div>
  );
}

function ScoreWindow() {
  return (
    <div className="mr-[243px] overflow-hidden rounded-tr-lg rounded-bl-lg border-r border-[#9fb4c2] bg-[#a9d0e7]">
      <TitleBar />
      <MenuBar />
      <Transport />
      <Palettes />
      <NoteValues />
      <div className="flex border-t-2 border-[#2d7ba3] pt-[2px] pr-[3px]">
        <DocumentTabs />
        <div className="w-px bg-[#d8ecf6]" />
        <Score />
      </div>
      <div className="mt-[2px] h-[27px] rounded-bl-lg border-y border-[#2d7ba3] bg-[#a5cfe7] pt-[2px]">
        <div className="border-t border-[#2d7ba3]" />
      </div>
    </div>
  );
}

/* ---------- Playlists window ---------- */

function PanelButton({ children, className = "" }) {
  return (
    <button
      type="button"
      className={`h-[50px] border-t border-l border-r border-b border-t-white border-l-white border-r-[#6b6b6b] border-b-[#6b6b6b] bg-[#f0f0f0] leading-4 text-black ${className}`}
    >
      {children}
    </button>
  );
}

function PlaylistBox() {
  const [selected, setSelected] = useState("Examples");

  return (
    <div className="flex h-20 bg-white">
      <ul role="listbox" aria-labelledby="playlists-label" className="flex-1">
        {playlists.map((name) => (
          <li
            key={name}
            role="option"
            aria-selected={name === selected}
            onClick={() => setSelected(name)}
            className={
              name === selected
                ? "mr-px h-4 bg-[#0078d7] pl-[2px] leading-[18px] text-white"
                : "mr-px h-4 pl-[2px] leading-[18px] text-black"
            }
          >
            {name}
          </li>
        ))}
      </ul>
      <div className="w-5 bg-[#f0f0f0] pt-[27px]">
        <div className="mx-auto h-8 w-[6px] bg-[#858585]" />
      </div>
    </div>
  );
}

function cellColor(rowIndex, genre) {
  if (rowIndex === 0) return "bg-[#ffff80]";
  if (rowIndex === 1) return "bg-[#c0ffc0]";
  return genre ? "bg-white" : "bg-[#e6f2ff]";
}

function SongTable() {
  return (
    <div className="flex-1 bg-white">
      <div className="bg-gradient-to-b from-[#f0f0f0] from-[50px] to-white to-[50px] pr-[18px]">
        <table className="w-full table-fixed border-separate border-spacing-0">
          <thead>
            <tr className="h-[50px]">
              <th className="w-6 border-r border-b border-[#a0a0a0] bg-[#f0f0f0]" />
              {columns.map((col) => (
                <th
                  key={col.title}
                  scope="col"
                  className={`${col.width} border-t border-r border-b border-l border-t-white border-r-[#a0a0a0] border-b-[#a0a0a0] border-l-white bg-[#0a246a] p-0 pt-px leading-4 font-bold whitespace-nowrap text-white`}
                >
                  {col.title}
                  <br />
                  {col.sort}
                </th>
              ))}
            </tr>
          </thead>
          <tbody>
            {songs.map((song, i) => (
              <tr key={song.name} className="h-[25px] text-black">
                <td
                  className={`border-r border-b border-[#a0a0a0] p-0 pt-px text-center ${
                    i === 0 ? "bg-[#ffff80]" : "bg-[#f0f0f0]"
                  }`}
                >
                  {song.row}
                </td>
                <td className={`border-r border-b border-r-black border-b-[#a0a0a0] p-0 pt-px pl-[5px] ${cellColor(i)}`}>
                  {song.name}
                </td>
                <td className={`border-r border-b border-[#a0a0a0] p-0 pt-px pl-[5px] ${cellColor(i, true)}`}>
                  {song.genre}
                </td>
                <td className={`border-r border-b border-[#a0a0a0] p-0 pt-px text-center ${cellColor(i)}`}>
                  {song.tempo}
                </td>
                <td className={`border-r border-b border-[#a0a0a0] p-0 pt-px text-center ${cellColor(i)}`}>
                  {song.status}
                </td>
                <td className={`border-r border-b border-[#a0a0a0] p-0 pt-px text-center ${cellColor(i)}`}>
                  {song.number}
                </td>
              </tr>
            ))}
          </tbody>
        </table>
      </div>
    </div>
  );
}

function PlaylistsWindow() {
  return (
    <section className="absolute top-[328px] right-0 bottom-0 left-[338px] flex flex-col overflow-hidden border-t-2 border-l-2 border-[#2f7ca3] bg-gradient-to-r from-[#a0cae5] to-[#c4e0ee] to-70% font-['DejaVu_Sans',Verdana,sans-serif] text-[13px]">
      <header className="flex h-[30px] shrink-0 items-center justify-between border-t border-l border-white bg-[#abd3e8] pl-[3px]">
        <h2 className="font-['Open_Sans',sans-serif] text-[13px] leading-4 text-[#1c2a33]">Playlists</h2>
        <button type="button" aria-label="Close playlists" className="text-[#16394e]">
          <X className="h-4 w-4" strokeWidth={2} />
        </button>
      </header>
      <div className="flex flex-1 gap-[5px] border-l border-white pt-[9px] pr-2 pl-[13px]">
        <div className="flex min-w-0 flex-1 flex-col">
          <div className="relative h-6 shrink-0 border border-[#0f6cbd] bg-white p-[2px]">
            <select
              aria-label="Playlist folder"
              className="block h-full w-[calc(100%-20px)] appearance-none bg-[#f0f0f0] pl-1 leading-4 text-black"
            >
              <option>C:\Users\Public\Documents\Notation_5\Songs</option>
            </select>
            <ChevronDown className="pointer-events-none absolute top-1 right-[2px] h-[14px] w-[14px] text-gray-600" strokeWidth={1.5} />
          </div>
          <h3 id="playlists-label" className="mt-8 mb-4 leading-4 font-bold text-black">
            Playlists
          </h3>
          <PlaylistBox />
          <div className="mt-5 flex items-start">
            <button
              type="button"
              className="h-[50px] w-[123px] border border-t-white border-l-white border-r-[#6b6b6b] border-b-[#6b6b6b] bg-[#ad0000] font-bold text-[#f3e6e6]"
            >
              Stop
            </button>
            <p className="mt-4 ml-[25px] leading-4 font-bold text-black">Minuet</p>
          </div>
          <PanelButton className="mt-[15px] w-[123px] shrink-0 px-6 pb-2">Playback Options</PanelButton>
          <h3 className="mt-[14px] mb-[15px] leading-4 font-bold text-black">Songs in playlist</h3>
          <SongTable />
        </div>
        <div className="w-[202px] shrink-0">
          <div className="grid grid-cols-2 gap-x-[14px]">
            <PanelButton>Folder...</PanelButton>
            <PanelButton>Help</PanelButton>
          </div>
          <div className="mt-[38px] grid grid-cols-2 gap-x-[14px] gap-y-[10px]">
            <PanelButton className="px-2 pb-2">Add playlist...</PanelButton>
            <PanelButton>Rename...</PanelButton>
            <PanelButton>Remove</PanelButton>
            <PanelButton>Backup...</PanelButton>
          </div>
          <div className="mt-[150px] grid grid-cols-2 gap-x-[14px] gap-y-[10px]">
            <PanelButton>Open &gt;&gt;</PanelButton>
            <PanelButton>Search...</PanelButton>
            <PanelButton>Close</PanelButton>
            <PanelButton>Close all</PanelButton>
            <PanelButton className="col-start-1">&lt;&lt; Add</PanelButton>
            <PanelButton className="col-start-1">Add...</PanelButton>
            <PanelButton className="px-2 pb-2">Add from folders...</PanelButton>
          </div>
        </div>
      </div>
    </section>
  );
}

/* ---------- Tutorial annotations ---------- */

function Annotations() {
  return (
    <svg
      className="pointer-events-none absolute inset-0 h-full w-full drop-shadow-[1px_3px_2px_rgba(0,0,0,0.45)]"
      aria-hidden="true"
    >
      <g fill="#f64641">
        <path d="M264 147l32 8-6 6 142 120h-22L283 169l-5 8z" />
        <path d="M700 291l129-4v-10l29 15-29 15v-9l-129 4z" />
        <path d="M520 345h10l3 182h11l-15 30-15-30h9z" />
        <path d="M303 772l49 3v-10l28 16-29 14v-11l-48-2z" />
        <path d="M380 815l-9 29-6-7-50 46-6-9 48-43-8-7z" />
      </g>
      <g fill="none" stroke="#ea504d" strokeWidth="3">
        <rect x="206.500" y="92.500" width="56" height="54" />
        <rect x="872.500" y="240.500" width="62" height="78" />
        <rect x="485.500" y="558.500" width="88" height="44" />
      </g>
      <path d="M575.500 589.500v15l3.500-3 3 5 2-1-3-5h5z" fill="#fff" stroke="#000" />
    </svg>
  );
}

function Callout({ className, children }) {
  return (
    <p
      className={`${className} absolute flex items-center rounded-md border-4 border-[#ee4a47] bg-white font-['Liberation_Sans',sans-serif] text-lg leading-[21px] whitespace-nowrap text-black shadow-[1px_4px_5px_rgba(0,0,0,0.45)]`}
    >
      {children}
    </p>
  );
}

export default function App() {
  return (
    <div className="relative min-h-screen overflow-hidden bg-white pt-[30px] font-['Open_Sans','Noto_Sans',sans-serif]">
      <div className="border-t border-[#e6e6e6]">
        <ScoreWindow />
      </div>
      <PlaylistsWindow />
      <Annotations />
      <Callout className="top-[279px] left-[282px] h-[69px] w-[422px] pl-[11px]">
        Playback of the first song (Minuet) has started.
      </Callout>
      <Callout className="top-[740px] left-[53px] h-[76px] w-[252px] pl-[6px]">
        The currently playing song is
        <br />
        highlighted in yellow.
      </Callout>
      <Callout className="top-[845px] left-[69px] h-[75px] w-[243px] pl-[5px]">
        The next song to be played
        <br />
        is highlighted in light green.
      </Callout>
    </div>
  );
}
